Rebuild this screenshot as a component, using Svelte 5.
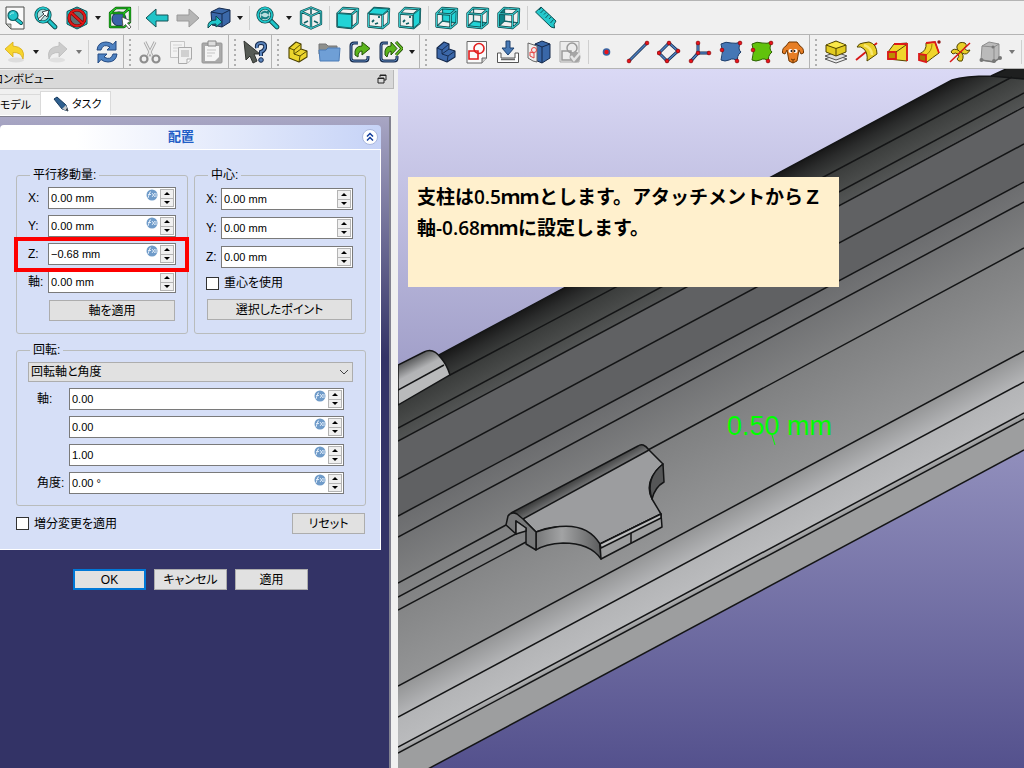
<script>
	const cube_faces = {
		front: 'M1.5 7.5 15.5 8.5V22L1.5 20.5Z',
		top: 'M1.5 7.5 15.5 8.5 22 3 7 2Z',
		right: 'M15.5 8.5 22 3 21.5 17 15.5 22Z',
		rear: 'M7 2 22 3 21.5 17 7.5 15Z',
		bottom: 'M1.5 20.5 15.5 22 21.5 17 7.5 15Z',
		left: 'M1.5 7.5 7 2 7.5 15 1.5 20.5Z'
	};
	const outline = (d, color, edge) =>
		`<path d="${d}" fill="none" stroke="${edge}" stroke-width="2.3" stroke-linejoin="round"/><path d="${d}" fill="none" stroke="${color}" stroke-width="1.1" stroke-linejoin="round"/>`;
	const cube = (face) => {
		const f = cube_faces;
		const fill = `<path d="${f[face]}" fill="${face === 'left' ? '#0f8387' : '#22d3d6'}"/>`;
		const front_side = ['front', 'top', 'right'].includes(face);
		const inner = front_side
			? '<path d="M5 16l2-2M8 18l3-1M12 12v-2" stroke="#0d5f62" stroke-width="1.8"/>'
			: '<path d="M7.5 3V15L2 20M7.5 15 21 17" fill="none" stroke="#17696c" stroke-width="1.3"/>';
		return (
			(front_side ? inner : fill + inner) +
			outline(f.front + f.top + f.right, '#38c9cc', '#0b4143') +
			(front_side ? fill + `<path d="${f[face]}" fill="none" stroke="#0b4143" stroke-width=".7"/>` : '')
		);
	};
	const lens = `<path d="M14 14l7 7" stroke="#0b4143" stroke-width="4.600" stroke-linecap="round"/><path d="M14 14l7 7" stroke="#20c5c9" stroke-width="3" stroke-linecap="round"/><circle cx="9" cy="9" r="7" fill="#b9dede" stroke="#0b4143" stroke-width="3.2"/><circle cx="9" cy="9" r="7" fill="none" stroke="#20c5c9" stroke-width="1.8"/>`;
	const dots = (list, r = 1.9) =>
		list.map(([x, y]) => `<circle cx="${x}" cy="${y}" r="${r}" fill="#e8131b" stroke="#7c0000" stroke-width=".6"/>`).join('');
	const rod = (d) =>
		`<path d="${d}" fill="none" stroke="#12294a" stroke-width="3"/><path d="${d}" fill="none" stroke="#4d7fc0" stroke-width="1.6"/>`;
	const solid = (color, edge) =>
		`<path d="M3 8 10 2 15 4V9L21 11V17L13 22 3 18Z" fill="${color}" stroke="${edge}" stroke-width="1.1" stroke-linejoin="round"/><path d="M3 8 8 10 15 4M8 10V14L14 16 21 11M14 16 13 22M8 14 15 9" fill="none" stroke="${edge}" stroke-width=".9"/>`;

	const icons = {
		fit_all: `<path d="M3 1H21V23H8L3 18Z" fill="#fafafa" stroke="#4a4d4a"/><path d="M3 18H8V23Z" fill="#bfc1bd" stroke="#4a4d4a" stroke-width=".7"/><path d="M13 13l5 4" stroke="#0b4143" stroke-width="4" stroke-linecap="round"/><path d="M13 13l5 4" stroke="#20c5c9" stroke-width="2.4" stroke-linecap="round"/><circle cx="10" cy="9.500" r="5" fill="#21c5ca" stroke="#126064" stroke-width="1.2"/><path d="M7 9q1-3 4-2" stroke="#a5eeee" fill="none"/>`,
		fit_selection: lens + `<path d="M4 13 10 8 8 6 15 4 13 11 11 9 6 15Z" fill="#fff" stroke="#263638" stroke-width=".9"/>`,
		draw_style: `<path d="M12 1 22 5.500V18L12 23 2 18V5.500Z" fill="#20cbd0" stroke="#0a5054"/><circle cx="12" cy="12" r="8" fill="#5c7375" stroke="#7e0000" stroke-width="3.200"/><circle cx="12" cy="12" r="8" fill="none" stroke="#e31818" stroke-width="2"/><path d="M6.500 7 17.500 17" stroke="#7e0000" stroke-width="3.200"/><path d="M6 6.500 18 17.500" stroke="#e31818" stroke-width="2"/>`,
		bounding: `<circle cx="11" cy="13" r="7" fill="#3a64a8" stroke="#172a50"/>` + outline('M2 7H16V21H2ZM2 7 8 2H22L16 7M22 2V16L16 21', '#27d527', '#064b06') + `<path d="M14 11 15 21 17.500 18.500 21 23 23 21 19.500 17 23 15Z" fill="#fff" stroke="#444" stroke-width=".8"/>`,
		back: `<path d="M1 12 11 3V9H23V15H11V21Z" fill="#21c4c8" stroke="#145356" stroke-linejoin="round"/>`,
		forward: `<path d="M23 12 13 3V9H1V15H13V21Z" fill="#b5b5b5" stroke="#999" stroke-linejoin="round"/>`,
		linked: `<path d="M4 6 12 2 23 4V16L15 21 5 19Z" fill="#3b68a9" stroke="#14294c"/><path d="M4 6 15 8 23 4M15 8V21" stroke="#14294c" fill="none"/><path d="M1 22Q0 14 9 14V10L15 16 9 21V18Q4 17 1 22Z" fill="#20c8cc" stroke="#0b4b4e"/>`,
		sync: lens + `<path d="M5 8Q8 4 12 7V5M13 10Q10 14 6 11V13" fill="none" stroke="#167f83" stroke-width="1.800"/>`,
		isometric: outline('M12 1.500 22 5.500V18L12 22.500 2 18V5.500ZM2 5.500 12 10 22 5.500M12 10V22', '#3cc3c7', '#0b4143') + `<path d="M12 3V8M5 17 9 15M19 17 15 15" stroke="#126266" stroke-width="1.600"/>`,
		front: cube('front'),
		top: cube('top'),
		right: cube('right'),
		rear: cube('rear'),
		bottom: cube('bottom'),
		left: cube('left'),
		ruler: `<path d="M1.500 6 7 1 22 15Q19 18 20.500 22L17 21Z" fill="#24c8cc" stroke="#0b5053"/><path d="M7 2 5 4M9.500 4 6.500 7M12 6.500 10 8.500M14.500 8.500 11.500 12M17 11 15 13M19.500 13.500 16.500 17" stroke="#0b5053" stroke-width=".9"/>`,

		undo: `<ellipse cx="13" cy="20" rx="8" ry="2.500" fill="#ddd"/><path d="M2 9 10 2V6Q23 7 20 19Q18 12 10 12.500V17Z" fill="#f7d52e" stroke="#d5ab19" stroke-width=".8"/>`,
		redo: `<ellipse cx="11" cy="20" rx="8" ry="2.500" fill="#e0e0e0"/><path d="M21 9 13 2V6Q0 7 3 19Q5 12 13 12.500V17Z" fill="#ccc" stroke="#bbb" stroke-width=".8"/>`,
		refresh: `<path d="M2 10Q3 2 11 2Q15 2 18 4.500L21 1V10H12L15 7Q8 3 6 10Z" fill="#4e82c2" stroke="#244a82"/><path d="M22 14Q21 22 13 22Q9 22 6 19.500L3 23V14H12L9 17Q16 21 18 14Z" fill="#4e82c2" stroke="#244a82"/>`,
		cut: `<path d="M7 2 14 16M17 2 10 16" stroke="#aaa" stroke-width="3"/><path d="M7 2 14 16M17 2 10 16" stroke="#eee" stroke-width="1.200"/><circle cx="6" cy="19" r="3.500" fill="none" stroke="#8e8e8e" stroke-width="2.200"/><circle cx="18" cy="19" r="3.500" fill="none" stroke="#8e8e8e" stroke-width="2.200"/>`,
		copy: `<path d="M1.500 1.500H15.500V17.500H1.500Z" fill="#f3f3f3" stroke="#c5c5c5"/><path d="M4 5H13M4 8H9M4 11H8" stroke="#d4d4d4"/><path d="M9.500 7.500H22.500V19L18 23.500H9.500Z" fill="#f0f0f0" stroke="#aaa"/><path d="M12 10H20V17H12Z" fill="#d0d0d0"/><path d="M18 23V19H22" fill="#fff" stroke="#aaa"/>`,
		paste: `<rect x="2" y="3" width="20" height="20" rx="1" fill="#aaa" stroke="#969696"/><path d="M5 6H19V17L15 21H5Z" fill="#f4f4f4"/><path d="M7 10H16M7 13H15M7 16H12" stroke="#c5c5c5"/><path d="M8 1H16V6H8Z" fill="#ddd" stroke="#888"/>`,
		whats_this: `<path d="M1 1 17 14H11L14 21 10 23 7 16 3 20Z" fill="#565b55" stroke="#30332f"/><path d="M14 8Q13 3 18 3Q23 3 22 8Q21 11 18 12V16" fill="none" stroke="#15294b" stroke-width="4"/><path d="M14 8Q13 3 18 3Q23 3 22 8Q21 11 18 12V16" fill="none" stroke="#5b85bd" stroke-width="2"/><circle cx="18" cy="20" r="2.300" fill="#5b85bd" stroke="#15294b"/>`,
		part: solid('#ecd52d', '#4b4100'),
		folder: `<path d="M2 4H9L11 6H20V14H2Z" fill="#8d8f8c" stroke="#777"/><path d="M2 10H9L11 8H23L22 21H3Z" fill="#6f9fd6" stroke="#4d7db8"/>`,
		link: `<path d="M10 3H6Q3 3 3 6V18Q3 21 6 21H17Q20 21 20 18V16" fill="none" stroke="#16294a" stroke-width="3"/><path d="M10 3H6Q3 3 3 6V18Q3 21 6 21H17Q20 21 20 18V16" fill="none" stroke="#5c88bd" stroke-width="1"/><path d="M7 15Q6 6 14 6V2L22 8.500 14 15V11Q10 11 10 17Z" fill="#5bb51c" stroke="#235006"/>`,
		link_group: `<path d="M9 3H4Q2 3 2 6V18Q2 21 5 21H15Q18 21 18 18V16" fill="none" stroke="#16294a" stroke-width="3"/><path d="M9 3H4Q2 3 2 6V18Q2 21 5 21H15Q18 21 18 18V16" fill="none" stroke="#5c88bd" stroke-width="1"/><path d="M6 15Q5 6 12 6V2L18 8.500 12 15V11Q9 11 8 17Z" fill="#5bb51c" stroke="#235006"/><path d="M17 2 23 8.500 17 15" fill="none" stroke="#235006" stroke-width="3"/><path d="M17 2 23 8.500 17 15" fill="none" stroke="#6dc52a" stroke-width="1.300"/>`,
		body: solid('#3c68aa', '#14284b'),
		sketch: `<path d="M2 1.500H21.500V18L17 23H2Z" fill="#fafafa" stroke="#666"/><path d="M17 23V18H22" fill="#ccc" stroke="#666"/><path d="M4 11H13V19H4Z" fill="none" stroke="#e21c1c" stroke-width="1.600"/><circle cx="14" cy="8.500" r="5" fill="none" stroke="#e21c1c" stroke-width="1.600"/>`,
		import: `<path d="M1.500 13H5V18H19V13H22.500V22.500H1.500Z" fill="#fff" stroke="#555"/><path d="M10 1H14V8H18L12 15 6 8H10Z" fill="#4779b5" stroke="#1d416f"/><path d="M5 19.500H19" stroke="#666" stroke-width="1.500"/>`,
		map_sketch: `<path d="M8 4 15 1 23 4V18L15 23 8 20Z" fill="#3967a8" stroke="#14284b"/><path d="M8 4 15 7 23 4M15 7V23" fill="none" stroke="#14284b"/><path d="M1 3 10 6V22L6 21 1 18Z" fill="#eee" stroke="#666"/><circle cx="7" cy="10" r="2.500" fill="none" stroke="#e64040" stroke-width="1"/><path d="M3 12 7 13V18L3 16Z" fill="none" stroke="#e64040" stroke-width="1"/>`,
		validate: `<path d="M2 1.500H21V22H2Z" fill="#ececec" stroke="#aaa"/><path d="M4 11H13V20H4Z" fill="none" stroke="#999" stroke-width="1.500"/><circle cx="14" cy="8" r="5" fill="none" stroke="#999" stroke-width="1.500"/><circle cx="17" cy="17" r="5.500" fill="#a6a6a6"/><path d="M13 16 16 20 22 13" fill="none" stroke="#e5e5e5" stroke-width="2.500"/>`,
		point: `<circle cx="11.500" cy="12" r="3.800" fill="#3864a2"/><circle cx="11.500" cy="12" r="2.200" fill="#e8131b"/>`,
		line: rod('M3 21 21 3') + dots([[3, 21], [21, 3]]),
		plane: rod('M12 3 21 11 10 21 2 13Z') + dots([[12, 3], [21, 11], [10, 21], [2, 13]]),
		axes: rod('M10 3V13H21M10 13 3 21') + dots([[10, 3], [21, 13], [10, 13], [3, 21]]),
		blue_shape: `<path d="M2 4Q7 1 12 3 17 4 22 2Q18 9 22 12Q17 16 19 22 15 17 10 20 6 22 2 20Q5 11 2 4Z" fill="#4577b5" stroke="#1d3d6b"/>` + dots([[21, 3], [3, 10], [18, 21]]),
		green_shape: `<path d="M2 4Q7 1 12 3 17 4 22 2Q18 9 22 12Q17 16 19 22 15 17 10 20 6 22 2 20Q5 11 2 4Z" fill="#61c20c" stroke="#2d6200"/>` + dots([[21, 3], [3, 10], [18, 21]]),
		clone: `<path d="M8 2H16L19 6Q23 8 22.500 13L20 14 18 10 16 21 12 23 8 21 6 10 4 14 1.500 13Q1 8 5 6Z" fill="#e77e25" stroke="#713600"/><circle cx="9.500" cy="11" r="2" fill="#fff"/><circle cx="14.500" cy="11" r="2" fill="#fff"/><circle cx="10.500" cy="11" r="1" fill="#111"/><circle cx="13.500" cy="11" r="1" fill="#111"/><path d="M10 19Q12 21 14 19M12 20V23" fill="none" stroke="#713600"/>`,

		pad: `<path d="M1 19 12 15 23 19 12 23Z" fill="#eee" stroke="#555"/><path d="M1 16 12 12 23 16 12 20Z" fill="#ddd" stroke="#555"/><path d="M2 5 12 1 22 5V12L12 16 2 12Z" fill="#e2cb21" stroke="#504300"/><path d="M3 5 12 2 21 5 12 8Z" fill="#fae84a"/><path d="M2 5 12 8.500 22 5M12 8.500V16" fill="none" stroke="#504300"/>`,
		revolution: `<path d="M1 20 22 3" stroke="#d71717" stroke-width="1.800"/><path d="M2 7Q4 3 8 3L14 2Q22 4 22 14L12 21Q13 13 9 9 6 6 2 7Z" fill="#e8ce28" stroke="#534600"/><path d="M9 5Q17 8 17 15" fill="none" stroke="#f8e872" stroke-width="2.500"/>`,
		loft: `<path d="M8 4 21 3V21L2 19V12Z" fill="#f0d52b" stroke="#534600"/><path d="M8 4H21V21" fill="none" stroke="#dc1a1a" stroke-width="1.800"/><path d="M2 12H10V19H2Z" fill="#bd8c00" stroke="#dc1a1a" stroke-width="1.800"/><path d="M10 12 20 5" stroke="#534600"/>`,
		sweep: `<path d="M9 3 18 2 22 13Q15 18 10 22L2 14Q10 11 9 3Z" fill="#f0d52b" stroke="#534600"/><path d="M15 4Q15 11 9 15" fill="none" stroke="#9d8500"/><path d="M9 3 18 2 22 13" fill="none" stroke="#dc1a1a" stroke-width="1.800"/><path d="M2 14 9 15V22L2 20Z" fill="#a57700" stroke="#dc1a1a" stroke-width="1.800"/><circle cx="22" cy="2" r="1.700" fill="#8d1515"/>`,
		helix: `<path d="M3 12Q5 7 12 11 17 15 14 21 10 22 9 19 12 17 10 14 7 12 5 14Z" fill="#e9cf27" stroke="#514400"/><path d="M9 6Q11 1 17 3 20 6 16 8 19 12 22 10 19 16 14 13 8 10 9 6Z" fill="#e9cf27" stroke="#514400"/><path d="M2 22 22 3" stroke="#d91717" stroke-width="1.500"/>`,
		primitive: `<path d="M3 6 10 2 20 4V18L15 22 2 20Z" fill="#bababa" stroke="#8d8d8d"/><path d="M3 6 15 7 20 4M15 7V21" fill="none" stroke="#8d8d8d"/><path d="M2 20 15 22 21 18" fill="none" stroke="#777" stroke-width="1.500"/><g fill="#777"><circle cx="2.500" cy="20" r="2"/><circle cx="15" cy="21" r="2"/><circle cx="21" cy="18" r="2"/><circle cx="14" cy="7" r="1.500"/></g>`
	};

	const view_tools = ['fit_all', 'fit_selection', 'draw_style', 'menu', 'bounding', 'sep', 'back', 'forward', 'linked', 'menu', 'sep', 'sync', 'menu', 'isometric', 'sep', 'front', 'top', 'right', 'sep', 'rear', 'bottom', 'left', 'sep', 'ruler'];
	const edit_tools = [
		'undo', 'menu', 'redo', 'menu_off', 'sep', 'refresh', 'grip',
		'cut', 'copy', 'paste', 'grip', 'whats_this', 'grip',
		'part', 'folder', 'link', 'link_group', 'menu', 'grip',
		'body', 'sketch', 'import', 'map_sketch', 'validate', 'sep',
		'point', 'line', 'plane', 'axes', 'blue_shape', 'green_shape', 'clone', 'grip',
		'pad', 'revolution', 'loft', 'sweep', 'helix', 'primitive', 'menu_off', 'sep'
	];

	let translation = $state([
		{ id: 'tx', label: 'X:', value: '0.00 mm', fx: true },
		{ id: 'ty', label: 'Y:', value: '0.00 mm', fx: true },
		{ id: 'tz', label: 'Z:', value: '−0.68 mm', fx: true, marked: true },
		{ id: 'ta', label: '軸:', value: '0.00 mm', fx: false }
	]);
	let center = $state([
		{ id: 'cx', label: 'X:', value: '0.00 mm' },
		{ id: 'cy', label: 'Y:', value: '0.00 mm' },
		{ id: 'cz', label: 'Z:', value: '0.00 mm' }
	]);
	let rotation = $state([
		{ id: 'rx', label: '軸:', value: '0.00', fx: true },
		{ id: 'ry', label: '', value: '0.00', fx: true },
		{ id: 'rz', label: '', value: '1.00', fx: true },
		{ id: 'ra', label: '角度:', value: '0.00 °', fx: true }
	]);

	const edges = [
		'M450 375 1012 77', 'M398 428 1024 93', 'M398 441 1024 107', 'M398 479 1024 144',
		'M398 516 1024 182', 'M398 537 1024 202', 'M398 583 506 525M648 450 1024 248',
		'M398 597 525 529', 'M398 610 526 542', 'M398 686 1024 351', 'M398 717 1024 382',
		'M398 747 1024 413', 'M398 753 1024 419', 'M398 785 1024 450'
	];
</script>

{#snippet tools(list)}
	{#each list as tool}
		{#if tool === 'sep'}
			<span class="sep"></span>
		{:else if tool === 'grip'}
			<span class="grip"></span>
		{:else if tool === 'menu' || tool === 'menu_off'}
			<button class="tool-menu" class:off={tool === 'menu_off'} aria-label="menu"></button>
		{:else}
			<button class="tool" aria-label={tool}>
				<svg viewBox="0 0 24 24">{@html icons[tool]}</svg>
			</button>
		{/if}
	{/each}
{/snippet}

{#snippet field(row)}
	<div class="row" class:marked={row.marked}>
		<label for={row.id}>{row.label}</label>
		<div class="spin">
			<input id={row.id} type="text" aria-label={row.label || '軸'} bind:value={row.value} />
			{#if row.fx}
				<svg class="fx" viewBox="0 0 12 12">
					<circle cx="6" cy="6" r="5.500" fill="#6f9bc9" />
					<path d="M2 9 4 3H5M2 5.500H5M6 8 9 4M6 4 9 8M10 4V8" fill="none" stroke="#e8f1fb" stroke-width=".9" />
				</svg>
			{/if}
			<div class="steps">
				<button aria-label="up"></button>
				<button aria-label="down"></button>
			</div>
		</div>
	</div>
{/snippet}

<div class="window">
	<div class="toolbar first">{@render tools(view_tools)}</div>
	<div class="toolbar">{@render tools(edit_tools)}</div>

	<div class="main">
		<div class="dock">
			<div class="dock-title">
				<span>コンボビュー</span>
				<button aria-label="float">
					<svg viewBox="0 0 10 10"><path d="M3 3V1H9V6H7M1 4H7V9H1ZM1 4.500H7M3 1.500H9" fill="none" stroke="#222" /></svg>
				</button>
			</div>
			<div class="tabs">
				<button class="tab">モデル</button>
				<button class="tab active">
					<svg viewBox="0 0 16 16">
						<path d="M1 3 4 1 13 9 15 15 9 13Z" fill="#2f608f" stroke="#16395c" />
						<path d="M9 13 13 9 15 15Z" fill="#c5c9cc" /><path d="M13 14 15 15 14 12Z" fill="#111" />
					</svg>
					タスク
				</button>
			</div>

			<div class="tasks">
				<div class="box">
					<div class="box-head">
						<h2>配置</h2>
						<button class="fold" aria-label="collapse">
							<svg viewBox="0 0 16 16">
								<circle cx="8" cy="8" r="7.500" fill="#fff" stroke="#a9b7dd" />
								<path d="M5 7.500 8 4.500 11 7.500M5 11.500 8 8.500 11 11.500" fill="none" stroke="#123d9c" stroke-width="1.500" />
							</svg>
						</button>
					</div>
					<div class="box-body">
						<div class="pair">
							<fieldset>
								<legend>平行移動量:</legend>
								{#each translation as row}
									{@render field(row)}
								{/each}
								<button class="btn inset">軸を適用</button>
							</fieldset>
							<fieldset class="center">
								<legend>中心:</legend>
								{#each center as row}
									{@render field(row)}
								{/each}
								<label class="check"><input type="checkbox" />重心を使用</label>
								<button class="btn">選択したポイント</button>
							</fieldset>
						</div>
						<fieldset class="rotation">
							<legend>回転:</legend>
							<div class="combo">
								<select aria-label="回転">
									<option>回転軸と角度</option>
								</select>
								<svg viewBox="0 0 10 6"><path d="M1 1 5 5 9 1" fill="none" stroke="#444" /></svg>
							</div>
							<div class="rows">
								{#each rotation as row}
									{@render field(row)}
								{/each}
							</div>
						</fieldset>
						<div class="foot">
							<label class="check"><input type="checkbox" />増分変更を適用</label>
							<button class="btn">リセット</button>
						</div>
					</div>
				</div>
				<div class="actions">
					<button class="btn primary">OK</button>
					<button class="btn">キャンセル</button>
					<button class="btn">適用</button>
				</div>
			</div>
		</div>

		<div class="viewport">
			<svg class="scene" viewBox="398 69 626 699" preserveAspectRatio="xMinYMin slice">
				<defs>
					<linearGradient id="hull" gradientUnits="userSpaceOnUse" x1="398" y1="377" x2="568" y2="694">
						<stop offset="0" stop-color="#181818" />
						<stop offset=".03" stop-color="#2a2b2b" />
						<stop offset=".064" stop-color="#3a3c3b" />
						<stop offset=".124" stop-color="#4a4c4b" />
						<stop offset=".157" stop-color="#525454" />
						<stop offset=".158" stop-color="#606163" />
						<stop offset=".34" stop-color="#606163" />
						<stop offset=".345" stop-color="#6c6d6f" />
						<stop offset=".504" stop-color="#7f8081" />
						<stop offset=".757" stop-color="#949596" />
						<stop offset=".83" stop-color="#b3b4b6" />
						<stop offset=".905" stop-color="#babbbd" />
						<stop offset=".92" stop-color="#9d9e9f" />
						<stop offset="1" stop-color="#9d9e9f" />
					</linearGradient>
					<linearGradient id="ridge" gradientUnits="userSpaceOnUse" x1="574" y1="479" x2="583" y2="495">
						<stop offset="0" stop-color="#3c3d3d" />
						<stop offset="1" stop-color="#9c9d9f" />
					</linearGradient>
					<linearGradient id="cove">
						<stop offset="0" stop-color="#777879" />
						<stop offset=".4" stop-color="#a2a3a4" />
						<stop offset="1" stop-color="#5b5c5d" />
					</linearGradient>
					<linearGradient id="pill" gradientUnits="userSpaceOnUse" x1="410" y1="357" x2="422" y2="380">
						<stop offset="0" stop-color="#4b4c4d" />
						<stop offset=".6" stop-color="#b2b3b5" />
						<stop offset="1" stop-color="#b9babb" />
					</linearGradient>
				</defs>

				<path d="M398 377 439 355 952 80Q965 76 991 76L1006 69H1024V450L398 785Z" fill="url(#hull)" />
				<path d="M991 76 1006 69H1024V79Q1005 77 991 76Z" fill="#1e1f1f" />
				<g fill="none" stroke="#141516" stroke-width="1.500">
					{#each edges as d}
						<path {d} />
					{/each}
					<path d="M439 355 952 80Q965 76 991 76L1006 69M991 76 1024 79" />
					<path d="M398 365 424 352Q433 347 441 358Q447 365 450 375L398 405Z" fill="url(#pill)" />
					<path d="M398 390 444 365" />
				</g>

				<g stroke="#141516" stroke-width="1.500" stroke-linejoin="round">
					<path d="M511 513 638 446Q643 442 649 450L523 519Z" fill="url(#ridge)" stroke="none" />
					<path d="M649 450 663 464Q643 481 652 499L661 514 600 544Q580 525 555 527 545 528 536 532L523 519" fill="#9c9d9f" />
					<path d="M649 450 523 519" />
					<path d="M536 532Q583 516 600 544L601 559Q590 543 563 543 545 544 536 550Z" fill="url(#cove)" />
					<path d="M663 464 664 482Q655 487 652 499Q645 478 663 464Z" fill="#555657" />
					<path d="M600 544 661 514 662 527 601 559Z" fill="#9d9e9f" />
					<path d="M600 544 661 514V518L601 548Z" fill="#bdbebf" />
					<path d="M506 525 508 516Q511 511 517 514L523 519 536 532V550L526 544V528L516 521V534Z" fill="#777879" />
					<path d="M516 521 526 528V531L516 534Z" fill="#9d9e9f" />
					<path d="M511 513 638 446Q643 442 649 450M631 533V543" fill="none" />
				</g>
				<text x="727" y="435">0.50 mm</text>
				<path d="M772 435 775 445" stroke="#00ff00" fill="none" />
			</svg>
			<p class="note">支柱は0.5ｍｍとします。アタッチメントからＺ軸-0.68ｍｍに設定します。</p>
		</div>
	</div>
</div>

<style>
	:global(body) {
		margin: 0;
	}
	.window {
		display: flex;
		flex-direction: column;
		height: 100vh;
		overflow: hidden;
		background: #f0f0f0;
		color: #000;
		font-family: 'Liberation Sans', 'Noto Sans CJK JP', sans-serif;
		font-size: 12px;
		line-height: 14px;
		font-feature-settings: 'palt';
	}
	button,
	input,
	select {
		box-sizing: border-box;
		margin: 0;
		padding: 0;
		border: 0;
		background: none;
		color: inherit;
		font: inherit;
		font-feature-settings: inherit;
	}
	svg {
		display: block;
		flex: none;
	}

	.toolbar {
		display: flex;
		align-items: center;
		flex: none;
		height: 33px;
		margin-left: -1px;
		border-bottom: 1px solid #b4b4b4;
		overflow: hidden;
	}
	.toolbar.first {
		border-top: 1px solid #b4b4b4;
	}
	.tool {
		display: flex;
		justify-content: center;
		flex: none;
		width: 31px;
	}
	.tool svg {
		width: 24px;
		height: 24px;
	}
	.tool-menu {
		display: flex;
		justify-content: center;
		flex: none;
		width: 12px;
	}
	.tool-menu::before {
		content: '';
		border: 3px solid transparent;
		border-top: 4px solid #1c1c1c;
		border-bottom: 0;
	}
	.tool-menu.off::before {
		border-top-color: #777;
	}
	.sep {
		flex: none;
		width: 1px;
		height: 24px;
		margin: 0 2px 0 3px;
		background: #cfcfcf;
	}
	.grip {
		display: flex;
		flex: none;
		width: 10px;
		height: 100%;
		margin-left: 1px;
		border-left: 1px solid #b4b4b4;
	}
	.grip::before {
		content: '';
		width: 2px;
		margin: 4px 0 2px 5px;
		background: repeating-linear-gradient(#b0b0b0 0 2px, transparent 2px 5px);
	}

	.main {
		display: flex;
		flex: 1;
		min-height: 0;
	}
	.dock {
		display: flex;
		flex-direction: column;
		flex: none;
		width: 398px;
	}
	.dock-title {
		display: flex;
		align-items: center;
		justify-content: space-between;
		height: 18px;
		margin: 1px 4px 0 0;
		padding-right: 6px;
		border: 1px solid #b8b8b8;
		border-width: 0 1px 1px 0;
		background: #d9d9d9;
		font-size: 11px;
	}
	.dock-title span {
		margin-left: -7px;
	}
	.dock-title svg {
		width: 10px;
		height: 10px;
	}
	.tabs {
		display: flex;
		align-items: flex-end;
		height: 26px;
		margin-right: 7px;
		border-bottom: 1px solid #fff;
		font-size: 11px;
	}
	.tab {
		display: flex;
		align-items: center;
		gap: 3px;
		height: 21px;
		padding: 0 9px 0 0;
		border: 1px solid #dadada;
		border-width: 1px 0 0;
	}
	.tab.active {
		height: 24px;
		padding: 0 9px 0 12px;
		border-width: 1px 1px 0;
		background: #fff;
	}
	.tab svg {
		width: 16px;
		height: 16px;
	}
	.tasks {
		flex: 1;
		margin-right: 7px;
		padding: 8px 8px 0 0;
		border: 1px solid #828290;
		border-width: 1px 2px 0 0;
		background: linear-gradient(#a8a6c4, #333366 240px);
	}

	.box-head {
		display: flex;
		align-items: center;
		height: 24px;
		padding-right: 3px;
		border-bottom: 1px solid #fff;
		border-radius: 4px 4px 0 0;
		background: linear-gradient(90deg, #fff 20%, #c6d3f7);
	}
	.box-head h2 {
		flex: 1;
		margin: 0;
		color: #215dc6;
		font-size: 13px;
		text-align: center;
	}
	.fold svg {
		width: 16px;
		height: 16px;
	}
	.box-body {
		padding: 18px 14px 14px 16px;
		border: 1px solid #fff;
		border-width: 0 1px 1px 0;
		background: #d6dff7;
	}
	.pair {
		display: grid;
		grid-template-columns: repeat(2, minmax(0, 1fr));
		gap: 6px;
	}
	fieldset {
		display: flex;
		flex-direction: column;
		gap: 6px;
		min-width: 0;
		margin: 0;
		padding: 5px 11px 11px;
		border: 1px solid #b9bcbc;
		border-radius: 3px;
	}
	legend {
		margin-left: 2px;
		padding: 0 3px;
	}
	.center {
		gap: 7px;
		padding: 6px 12px 11px 11px;
	}
	.rotation {
		margin-top: 9px;
		padding-right: 12px;
	}
	.rows {
		display: flex;
		flex-direction: column;
		gap: 6px;
		padding: 0 9px;
	}
	.row {
		display: grid;
		grid-template-columns: 20px minmax(0, 1fr);
		align-items: center;
		position: relative;
	}
	.center .row {
		grid-template-columns: 15px minmax(0, 1fr);
	}
	.rows .row {
		grid-template-columns: 32px minmax(0, 1fr);
	}
	.row label {
		white-space: nowrap;
	}
	.row.marked::after {
		content: '';
		position: absolute;
		inset: -6px -13px -7px -14px;
		border: 4px solid #fe0000;
		pointer-events: none;
		z-index: 1;
	}
	.spin {
		display: flex;
		box-sizing: border-box;
		height: 22px;
		padding: 1px;
		border: 1px solid #7a7a7a;
		background: #fff;
	}
	.spin input {
		flex: 1;
		width: 0;
		min-width: 0;
		padding-left: 1px;
		font-size: 11px;
		outline: 0;
	}
	.fx {
		width: 12px;
		height: 12px;
		margin-right: 2px;
	}
	.steps {
		display: flex;
		flex-direction: column;
		flex: none;
		width: 14px;
	}
	.steps button {
		display: flex;
		align-items: center;
		justify-content: center;
		flex: 1;
		border: 1px solid #b4b4b4;
		background: #f0f0f0;
	}
	.steps button + button {
		border-top: 0;
	}
	.steps button::before {
		content: '';
		border: 3px solid transparent;
		border-top: 0;
		border-bottom-color: #000;
	}
	.steps button + button::before {
		border-top: 3px solid #000;
		border-bottom: 0;
	}
	.btn {
		height: 21px;
		min-width: 73px;
		margin: 1px;
		border: 1px solid #adadad;
		background: #e1e1e1;
	}
	.btn.primary {
		border: 2px solid #0078d7;
	}
	fieldset .btn.inset {
		margin-left: 21px;
	}
	.check {
		display: flex;
		align-items: center;
		gap: 5px;
		height: 16px;
	}
	.check input {
		appearance: none;
		width: 13px;
		height: 13px;
		border: 1px solid #333;
		background: #fff;
	}
	.combo {
		display: flex;
		align-items: center;
		position: relative;
	}
	.combo select {
		appearance: none;
		flex: 1;
		height: 20px;
		padding: 0 20px 0 2px;
		border: 1px solid #adadad;
		background: #e1e1e1;
	}
	.combo svg {
		position: absolute;
		right: 4px;
		width: 10px;
		height: 6px;
		pointer-events: none;
	}
	.foot {
		display: flex;
		align-items: center;
		justify-content: space-between;
		margin-top: 6px;
	}
	.actions {
		display: flex;
		justify-content: center;
		gap: 6px;
		padding-top: 18px;
	}

	.viewport {
		flex: 1;
		min-width: 0;
		position: relative;
		overflow: hidden;
		background: linear-gradient(#dad9f5, #54518d);
	}
	.scene {
		width: 100%;
		height: 100%;
	}
	.scene text {
		fill: #00ff00;
		font-size: 27px;
	}
	.note {
		position: absolute;
		top: 108px;
		left: 10px;
		box-sizing: border-box;
		width: 431px;
		min-height: 110px;
		margin: 0;
		padding: 5px 9px;
		background: #fff0cd;
		font-family: 'Open Sans', 'Noto Sans CJK JP', sans-serif;
		font-size: 19px;
		font-weight: 600;
		line-height: 31px;
		font-feature-settings: normal;
	}
</style>
